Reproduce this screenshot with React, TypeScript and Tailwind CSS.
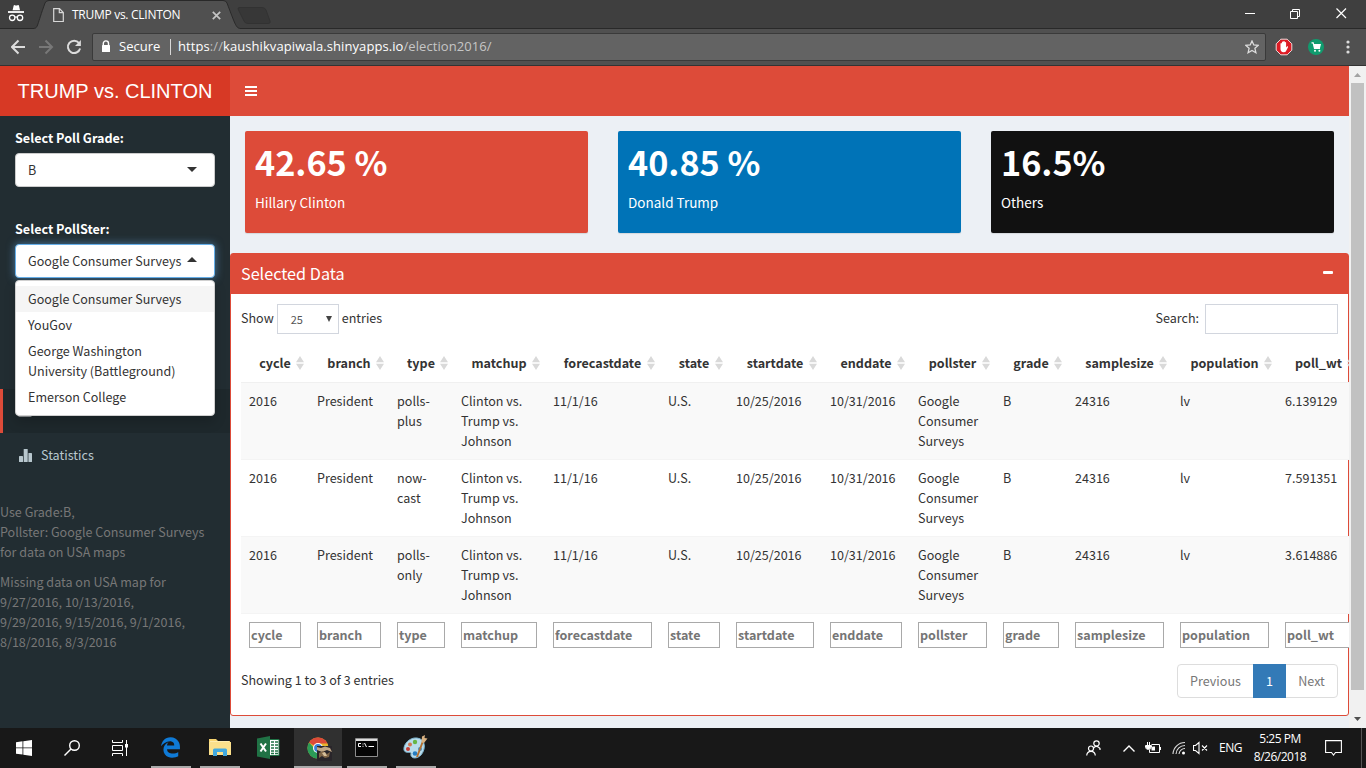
import React from "react";
import { FaEdgeLegacy } from "react-icons/fa6";

const sans = "font-['Noto_Sans_CJK_SC','Noto_Sans',sans-serif]";
const ui = "font-['Open_Sans','Noto_Sans',sans-serif]";

const columns = [
  { name: "cycle", w: "w-[68px]" },
  { name: "branch", w: "w-[80px]" },
  { name: "type", w: "w-[64px]" },
  { name: "matchup", w: "w-[92px]" },
  { name: "forecastdate", w: "w-[115px]" },
  { name: "state", w: "w-[68px]" },
  { name: "startdate", w: "w-[94px]" },
  { name: "enddate", w: "w-[88px]" },
  { name: "pollster", w: "w-[85px]" },
  { name: "grade", w: "w-[72px]" },
  { name: "samplesize", w: "w-[105px]" },
  { name: "population", w: "w-[105px]" },
  { name: "poll_wt", w: "w-[83px]" },
];

const rows = [
  { type: "polls-plus", wt: "6.139129" },
  { type: "now-cast", wt: "7.591351" },
  { type: "polls-only", wt: "3.614886" },
].map((r) => [
  "2016", "President", r.type, "Clinton vs. Trump vs. Johnson", "11/1/16", "U.S.", "10/25/2016",
  "10/31/2016", "Google Consumer Surveys", "B", "24316", "lv", r.wt,
]);

function TabStrip() {
  return (
    <div className={`relative flex h-7 shrink-0 bg-[#3f3f3f] text-white ${ui}`}>
      <svg className="absolute left-0 top-0" width="1366" height="29" viewBox="0 0 1366 29">
        <path d="M0 28.5H34C38 28 37 25 45 3Q46 .5 49 .5H223Q226 .5 227 3C235 24 236 28 240 28.5H1366" fill="#505050" stroke="#292929" />
        <path d="M240 7.5H262Q265 7.5 266 10L270 21Q271 23.500 268 23.500H248Q245 23.500 244 21L238.500 10Q237 7.500 240 7.500Z" fill="#373737" stroke="#323232" />
      </svg>
      <svg className="relative ml-2 mt-1 shrink-0" width="17" height="18" viewBox="0 0 17 18" fill="none" stroke="#fff">
        <path d="M4.600 6.300 5.700 1.500Q6 .8 7 1.300Q8 1.700 9.500 1.200Q10.800 .8 11 1.700L12 6.300Z" fill="#fff" stroke="none" />
        <path d="M0 8H16" strokeWidth="1.800" />
        <circle cx="4.200" cy="13.800" r="2.700" strokeWidth="1.300" />
        <circle cx="12" cy="13.800" r="2.700" strokeWidth="1.300" />
        <path d="M6.900 13.300Q8.100 12.500 9.300 13.300" strokeWidth="1.200" />
      </svg>
      <svg className="relative ml-7 mt-2 shrink-0" width="11" height="15" viewBox="0 0 11 15" fill="none" stroke="#d8d8d8">
        <path d="M.7 .7H6.500L10.300 4.500V13.500H.7ZM6.300 .7V4.700H10.300" strokeWidth="1.200" />
      </svg>
      <span className="relative ml-2 mt-1.5 w-[140px] whitespace-nowrap text-[12px] leading-[17px] tracking-[-0.28px]">TRUMP vs. CLINTON</span>
      <svg className="relative mt-[11px]" width="9" height="9" viewBox="0 0 9 9" stroke="#c4c4c4" strokeWidth="1.700">
        <path d="M.8 .8 8.200 8.200M8.200 .8.8 8.200" />
      </svg>
      <svg className="relative ml-auto mr-[19px] mt-2" width="102" height="11" viewBox="0 0 102 11" fill="none" stroke="#fff">
        <path d="M0 5.500H10" />
        <path d="M45.500 3.500H52.500V10.500H45.500ZM47.500 3.500V1.500H54.500V8.500H52.500" />
        <path d="M91.500 .5 101 10M101 .5 91.500 10" strokeWidth="1.200" />
      </svg>
    </div>
  );
}

function Toolbar() {
  return (
    <div className={`flex h-[38px] shrink-0 items-center border-b border-[#333] bg-[#505050] text-white ${ui}`}>
      <svg className="ml-[11px] shrink-0" width="72" height="16" viewBox="0 0 72 16" fill="none" strokeWidth="2">
        <path d="M14 8H1.500M7.500 1.500 1 8 7.500 14.500" stroke="#dcdcdc" />
        <path d="M28 8H40.500M34.500 1.500 41 8 34.500 14.500" stroke="#787878" />
        <path d="M68 4A6.200 6.200 0 1 0 69.100 9.500" stroke="#dcdcdc" />
        <path d="M69.900 1V7H64Z" fill="#dcdcdc" />
      </svg>
      <div className="ml-[9px] flex h-[28px] w-[1174px] items-center rounded-[2px] border border-[#3a3a3a] bg-[#636363]">
        <svg className="ml-2" width="10" height="13" viewBox="0 0 10 13">
          <path d="M2.300 5V3.500A2.600 2.600 0 0 1 7.500 3.500V5" fill="none" stroke="#fff" strokeWidth="1.400" />
          <rect x="1" y="5" width="8" height="7" rx=".5" fill="#fff" />
        </svg>
        <span className="ml-2 w-[51px] pt-px text-[13px]">Secure</span>
        <span className="mr-[7px] h-4 w-px bg-[#d8d8d8]" />
        <span className="pt-px whitespace-nowrap text-[13px] tracking-[0.08px]">
          https<span className="text-[#bbb]">://</span>kaushikvapiwala.shinyapps.io<span className="text-[#c6c6c6]">/election2016/</span>
        </span>
        <svg className="ml-auto mr-[6px]" width="14" height="14" viewBox="0 0 14 14">
          <path d="M7 1 8.800 5 13.200 5.400 9.900 8.300 10.900 12.700 7 10.400 3.100 12.700 4.100 8.300.8 5.400 5.200 5Z" fill="none" stroke="#ddd" strokeWidth="1.300" />
        </svg>
      </div>
      <svg className="ml-[9px]" width="18" height="18" viewBox="0 0 18 18">
        <path d="M5.800 1.200H12.200L16.800 5.800V12.200L12.200 16.800H5.800L1.200 12.200V5.800Z" fill="#dd1d26" stroke="#f2d8d8" />
        <path d="M5.500 9V5.500Q6.200 4.700 6.900 5.500V4Q7.600 3.200 8.300 4V3.300Q9 2.600 9.700 3.300V4.300Q10.500 3.600 11.100 4.500V9.500L12.200 8.300Q13.400 8 13 9.300L10.800 13.500Q10 14.500 8.500 14.300Q5.500 14 5.500 11Z" fill="#fff" />
      </svg>
      <svg className="ml-[15px]" width="16" height="16" viewBox="0 0 16 16">
        <circle cx="8" cy="8" r="8" fill="#109b6e" />
        <path d="M3.500 3.800H5.200L6.500 9.500H12" fill="none" stroke="#fff" strokeWidth="1.200" />
        <path d="M5.300 5H13L12 9H6.300Z" fill="#fff" />
        <circle cx="7" cy="11.700" r="1" fill="#fff" /><circle cx="11.400" cy="11.700" r="1" fill="#fff" />
      </svg>
      <svg className="ml-[22px]" width="4" height="14" viewBox="0 0 4 14" fill="#dcdcdc">
        <circle cx="2" cy="2" r="1.600" /><circle cx="2" cy="7" r="1.600" /><circle cx="2" cy="12" r="1.600" />
      </svg>
    </div>
  );
}

function Sidebar() {
  return (
    <aside className="flex w-[230px] shrink-0 flex-col bg-[#222d32] text-white">
      <div className="mt-3 px-[15px]">
        <div className="text-[12.6px] leading-5 font-bold">Select Poll Grade:</div>
        <div className="mt-[5px] flex h-[34px] items-center justify-between rounded-[4px] border border-[#ccc] bg-white pr-[17px] pl-3 text-[12.55px] text-[#333]">
          <span>B</span>
          <svg width="10" height="5" className="mb-px"><path d="M0 0H10L5 5Z" fill="#333" /></svg>
        </div>
      </div>
      <div className="relative mt-8 px-[15px]">
        <div className="text-[12.6px] leading-5 font-bold">Select PollSter:</div>
        <div className="mt-[5px] flex h-[34px] items-center justify-between rounded-[4px] border border-[#66afe9] bg-white pr-[17px] pl-3 text-[12.55px] text-[#333] shadow-[0_0_8px_rgba(102,175,233,0.6)]">
          <span className="whitespace-nowrap">Google Consumer Surveys</span>
          <svg width="10" height="5" className="mb-1"><path d="M0 5H10L5 0Z" fill="#333" /></svg>
        </div>
        <div className="absolute left-[15px] top-[61px] z-10 h-[136px] w-[200px] rounded-[4px] border border-[#d0d0d0] bg-white py-[5px] text-[12.55px] leading-5 text-[#333] shadow-[0_6px_12px_rgba(0,0,0,0.175)]">
          <div className="bg-[#f5f5f5] px-3 py-[3px]">Google Consumer Surveys</div>
          <div className="px-3 py-[3px]">YouGov</div>
          <div className="px-3 py-[3px]">George Washington University (Battleground)</div>
          <div className="px-3 py-[3px]">Emerson College</div>
        </div>
      </div>
      <div className="mt-[111px] flex h-11 items-center border-l-[3px] border-[#dd4b39] bg-[#1e282c] pl-[15px]">
        <svg width="14" height="12"><rect y="1" width="14" height="10.500" rx="1.500" fill="#fff" /></svg>
      </div>
      <div className="flex h-11 items-center pl-[19px] text-[12.6px] text-[#b8c7ce]">
        <svg width="13" height="13" viewBox="0 0 13 13" fill="#b8c7ce">
          <rect y="7" width="4" height="6" rx=".6" /><rect x="4.700" width="4" height="13" rx=".6" /><rect x="9.400" y="4" width="3.600" height="9" rx=".6" />
        </svg>
        <span className="ml-[9px]">Statistics</span>
      </div>
      <div className="mt-[25px] text-[12.55px] leading-5 text-[#777]">
        <p>Use Grade:B,<br />Pollster: Google Consumer Surveys<br />for data on USA maps</p>
        <p className="mt-[10px]">Missing data on USA map for<br />9/27/2016, 10/13/2016,<br />9/29/2016, 9/15/2016, 9/1/2016,<br />8/18/2016, 8/3/2016</p>
      </div>
    </aside>
  );
}

function ValueBox({ value, label, color }: { value: string; label: string; color: string }) {
  return (
    <div className={`h-[102px] w-[343px] rounded-[2px] px-[10px] pt-[9px] text-white shadow-[0_1px_1px_rgba(0,0,0,0.1)] ${color}`}>
      <div className="h-[42px] text-[34.2px] leading-[42px] font-bold whitespace-nowrap">{value}</div>
      <div className="mt-[10px] text-[13.5px] leading-[21px]">{label}</div>
    </div>
  );
}

function SortIcon() {
  return (
    <svg className="absolute top-[15px] right-[5px]" width="8" height="14" viewBox="0 0 8 14" fill="#d9d9d9">
      <path d="M4 0 8 6.300H0ZM0 7.700H8L4 14Z" />
    </svg>
  );
}

function DataBox() {
  return (
    <section className="mt-5 h-[463px] rounded-[3px] border border-[#dd4b39] bg-white text-[12.55px] leading-5 text-[#333]">
      <header className="flex h-10 items-center justify-between bg-[#dd4b39] pr-[15px] pl-[10px] text-white">
        <h3 className="pb-[3px] text-[16.2px]">Selected Data</h3>
        <span className="mb-[3px] h-[3px] w-[10px] rounded-[1px] bg-white" />
      </header>
      <div className="p-[10px]">
        <div className="flex h-[30px] items-center justify-between">
          <div className="flex items-center">
            <span className="pb-[2px]">Show</span>
            <span className="mx-[3px] flex h-[30px] w-[62px] items-center justify-between border border-[#d2d6de] pr-[6px] pl-[13px] text-[11px] text-[#555]">
              <span>25</span>
              <svg width="6" height="6"><path d="M0 0H6L3 6Z" fill="#444" /></svg>
            </span>
            <span className="pb-[2px]">entries</span>
          </div>
          <div className="flex items-center"><span className="pb-[2px]">Search:</span><span className="ml-[6px] h-[30px] w-[133px] border border-[#d2d6de]" /></div>
        </div>
        <table className="mt-[7px] w-[1119px] table-fixed border-collapse">
          <thead>
            <tr className="h-[41px]">
              {columns.map((c) => (
                <th key={c.name} className={`relative border-b border-[#f0f0f0] p-0 pt-[3px] text-center align-middle font-bold ${c.w}`}>{c.name}<SortIcon /></th>
              ))}
            </tr>
          </thead>
          <tbody>
            {rows.map((r, i) => (
              <tr key={i} className="h-[77px] border-b border-[#f4f4f4] odd:bg-[#f9f9f9]">
                {r.map((v, j) => (
                  <td key={j} className="px-2 pt-2 pb-2 align-top">{v}</td>
                ))}
              </tr>
            ))}
          </tbody>
          <tfoot>
            <tr>
              {columns.map((c) => (
                <td key={c.name} className="px-2 py-2">
                  <div className="h-[26px] overflow-hidden border border-[#a9a9a9] bg-white px-px leading-6 font-bold whitespace-nowrap text-[#757575]">{c.name}</div>
                </td>
              ))}
            </tr>
          </tfoot>
        </table>
        <div className="mt-2 flex h-[34px] items-center justify-between">
          <span className="pb-[2px]">Showing 1 to 3 of 3 entries</span>
          <div className="flex h-[34px] items-center rounded-[4px] border border-[#ddd] text-[#777]">
            <span className="w-[75px] text-center">Previous</span>
            <span className="flex h-[34px] w-[33px] items-center justify-center bg-[#337ab7] text-white">1</span>
            <span className="w-[51px] text-center">Next</span>
          </div>
        </div>
      </div>
    </section>
  );
}

function Page() {
  return (
    <div className={`flex h-[662px] shrink-0 ${sans}`}>
      <div className="flex w-[1349px] flex-col overflow-hidden">
        <div className="flex h-[50px] shrink-0 bg-[#dd4b39] text-white">
          <div className="w-[230px] bg-[#d73925] text-center font-['Liberation_Sans',Arial,sans-serif] text-[20px] leading-[50px]">TRUMP vs. CLINTON</div>
          <svg className="mt-5 ml-[15px]" width="12" height="11"><path d="M0 1H12M0 5H12M0 9H12" stroke="#fff" strokeWidth="2" /></svg>
        </div>
        <div className="flex grow">
          <Sidebar />
          <main className="w-[1119px] shrink-0 bg-[#ecf0f5] pt-[15px]">
            <div className="flex justify-between px-[15px]">
              <ValueBox value="42.65 %" label="Hillary Clinton" color="bg-[#dd4b39]" />
              <ValueBox value="40.85 %" label="Donald Trump" color="bg-[#0073b7]" />
              <ValueBox value="16.5%" label="Others" color="bg-[#111]" />
            </div>
            <DataBox />
          </main>
        </div>
      </div>
      <div className="flex w-[17px] flex-col items-center bg-[#f1f1f1]">
        <svg className="mt-[7px]" width="7" height="4"><path d="M0 4H7L3.500 0Z" fill="#a3a3a3" /></svg>
        <div className="mt-[6px] h-[607px] w-[13px] bg-[#c1c1c1]" />
        <svg className="mt-auto mb-[7px]" width="7" height="4"><path d="M0 0H7L3.500 4Z" fill="#505050" /></svg>
      </div>
    </div>
  );
}

function TaskApp({ active, running, className, children }: { active?: boolean; running?: boolean; className?: string; children: React.ReactNode }) {
  return (
    <div className={`flex h-10 flex-col items-center ${active ? "bg-[#303030]" : ""} ${className ?? ""}`}>
      <div className="flex h-[38px] items-center justify-center pr-px">{children}</div>
      {running && <div className="h-[2px] w-full bg-[#aaa]" />}
    </div>
  );
}

function Taskbar() {
  return (
    <div className={`flex h-10 shrink-0 bg-[#181818] text-white ${ui}`}>
      <svg className="ml-4 mt-3" width="16" height="16" viewBox="0 0 16 16" fill="#fff">
        <path d="M0 2.200 6.500 1.300V7.500H0ZM7.300 1.200 16 0V7.500H7.300ZM0 8.300H6.500V14.600L0 13.700ZM7.300 8.300H16V16L7.300 14.700Z" />
      </svg>
      <svg className="ml-8 mt-3" width="16" height="16" viewBox="0 0 16 16" fill="none" stroke="#fff" strokeWidth="1.400">
        <circle cx="10.500" cy="5.500" r="4.800" /><path d="M7 9 .5 15.500" />
      </svg>
      <svg className="ml-8 mt-3" width="16" height="16" viewBox="0 0 16 16" fill="none" stroke="#fff">
        <path d="M.5 0V2.500H10.500V0M.5 16V13.500H10.500V16M.5 5.500H10.500V10.500H.5ZM14.500 0V16" />
        <path d="M13 4H16V7.500H13Z" fill="#fff" stroke="none" />
      </svg>
      <TaskApp running className="ml-[23px] w-10"><FaEdgeLegacy size={21} color="#0f7ad6" /></TaskApp>
      <TaskApp running className="ml-[9px] w-10">
        <svg width="22" height="19" viewBox="0 0 22 19">
          <path d="M0 1H7L9 3H21V17H0Z" fill="#f6d36f" /><path d="M1 3H20V4H1Z" fill="#ffedb0" /><path d="M0 4H22V17H0Z" fill="#fbe08b" />
          <path d="M4 18V12Q4 10.500 5.500 10.500H16.500Q18 10.500 18 12V18H14V14H8V18Z" fill="#42a9df" />
        </svg>
      </TaskApp>
      <TaskApp className="ml-[9px] w-10">
        <svg width="23" height="23" viewBox="0 0 23 23">
          <path d="M12 3.500H22V19.500H12Z" fill="#fff" stroke="#207245" />
          <path d="M14 6H17M18 6H21M14 9H17M18 9H21M14 12H17M18 12H21M14 15H17M18 15H21M14 17.500H17M18 17.500H21" stroke="#207245" strokeWidth="1.600" />
          <path d="M0 2.500 13 0V23L0 20.500Z" fill="#207245" />
          <path d="M3.500 7.500 9 15.500M9 7.500 3.500 15.500" stroke="#fff" strokeWidth="2" />
        </svg>
      </TaskApp>
      <TaskApp active running className="ml-[5px] w-12">
        <svg className="mt-1 ml-[5px]" width="26" height="26" viewBox="0 0 26 26">
          <circle cx="11" cy="12" r="10.500" fill="#e6b52c" />
          <path d="M11 12 2 6.500A10.500 10.500 0 0 1 20.500 7.500H11Z" fill="#dc4a38" />
          <path d="M2 6.500A10.500 10.500 0 0 0 11 22.500L14 14 9 14Z" fill="#2b9b57" />
          <circle cx="11" cy="12" r="5" fill="#fff" /><circle cx="11" cy="12" r="3.900" fill="#3b7fd5" />
          <path d="M10 10H25V25H10Z" fill="#29252a" />
          <path d="M10 11 14 12 18 10.500 23 12 25 16 20 14 15 16 10 14Z" fill="#c1a886" />
          <path d="M12 17 16 15 20 18 23 16 22 21 18 22 15 20 12 22Z" fill="#806547" />
          <path d="M15 17 18 16 20 20 17 20Z" fill="#d7bf9b" />
        </svg>
      </TaskApp>
      <TaskApp running className="ml-[5px] w-10">
        <svg width="23" height="19" viewBox="0 0 23 19">
          <path d="M.5 .5H22.500V18.500H.5Z" fill="#050505" stroke="#8d8d8d" /><path d="M1 1H22V3H1Z" fill="#ddd" />
          <path d="M6 5.500H3.500V8.500H6M8 5.500V6.500M8 7.800V8.800M9.500 5 11.500 9M13.500 8.500H19" fill="none" stroke="#fff" />
        </svg>
      </TaskApp>
      <TaskApp running className="ml-[9px] w-10">
        <svg width="25" height="24" viewBox="0 0 25 24">
          <path d="M1 15C0 9 7 2 14 3C23 4 23 14 18 20C13 25 7 23 8 19C9 16 2 19 1 15Z" fill="#b8dcec" stroke="#7eb5d0" />
          <circle cx="5" cy="14" r="2" fill="#c63c35" /><circle cx="7" cy="9.500" r="2" fill="#cf7652" /><circle cx="12" cy="7" r="2.200" fill="#65b645" />
          <circle cx="12" cy="18.500" r="2.300" fill="#247dc1" /><circle cx="17" cy="14" r="2" fill="#438fc7" />
          <path d="M14 22 20 6" stroke="#b37030" strokeWidth="2" /><path d="M18.500 7.500 19 1.500 22 0 21.500 3 24.500 3.500 21 8Z" fill="#d9b282" />
        </svg>
      </TaskApp>
      <div className="ml-auto flex items-center">
        <svg width="16" height="16" viewBox="0 0 16 16" fill="none" stroke="#fff" strokeWidth="1.200">
          <circle cx="10.500" cy="3.500" r="2.700" /><path d="M7.500 8Q10.500 4.500 14 8.500V10" />
          <circle cx="5" cy="8.500" r="2.500" /><path d="M.7 15.500Q1 11.300 5 11.300T9.300 15.500" />
        </svg>
        <svg className="ml-[21px]" width="12" height="7" fill="none" stroke="#fff" strokeWidth="1.400"><path d="M.5 6.500 6 1 11.500 6.500" /></svg>
        <svg className="ml-[10px]" width="17" height="13" viewBox="0 0 17 13" fill="none" stroke="#fff">
          <path d="M6.500 2.500H14.500V10.500H4.500V8M2.500 0V3M4.500 0V3M.5 3.500H6.500V5.500Q6 7.500 3.500 7.500T.5 5.500ZM15.500 5V8" /><path d="M1 4H6V5.500L4.500 7H2L1 5.500ZM7.500 4.500H10V8.500H6.500V6.500Z" fill="#fff" stroke="none" />
        </svg>
        <svg className="ml-[10px]" width="14" height="14" viewBox="0 0 14 14" fill="none" stroke="#ddd" strokeWidth="1.100">
          <path d="M1 13A12 12 0 0 1 13 1.500M4 13A9 9 0 0 1 13 4.500M7 13A6 6 0 0 1 13 7.500" /><circle cx="11.500" cy="12" r="1.500" fill="#fff" stroke="none" />
        </svg>
        <svg className="ml-[7px]" width="15" height="14" viewBox="0 0 15 14" fill="none" stroke="#fff" strokeWidth="1.100">
          <path d="M.5 4.500H2.500L6 1.500V12.500L2.500 9.500H.5ZM9 4.500 14 9.500M14 4.500 9 9.500" />
        </svg>
        <span className="ml-[11px] w-6 text-[12px] tracking-[-0.5px]">ENG</span>
        <div className="ml-2 w-[58px] text-center text-[12px] leading-[18px] tracking-[-0.5px] whitespace-nowrap">5:25 PM<br />8/26/2018</div>
        <svg className="ml-[16px] mr-[15px]" width="17" height="16" viewBox="0 0 17 16" fill="none" stroke="#fff" strokeWidth="1.100"><path d="M.6 .6H16.400V12.500H10.500L8.500 15 6.500 12.500H.6Z" /></svg>
        <span className="mr-[4px] ml-[4px] h-10 w-px bg-[#555]" />
      </div>
    </div>
  );
}

export default function App() {
  return (
    <div className="flex h-[768px] w-[1366px] flex-col overflow-hidden">
      <TabStrip />
      <Toolbar />
      <Page />
      <Taskbar />
    </div>
  );
}
